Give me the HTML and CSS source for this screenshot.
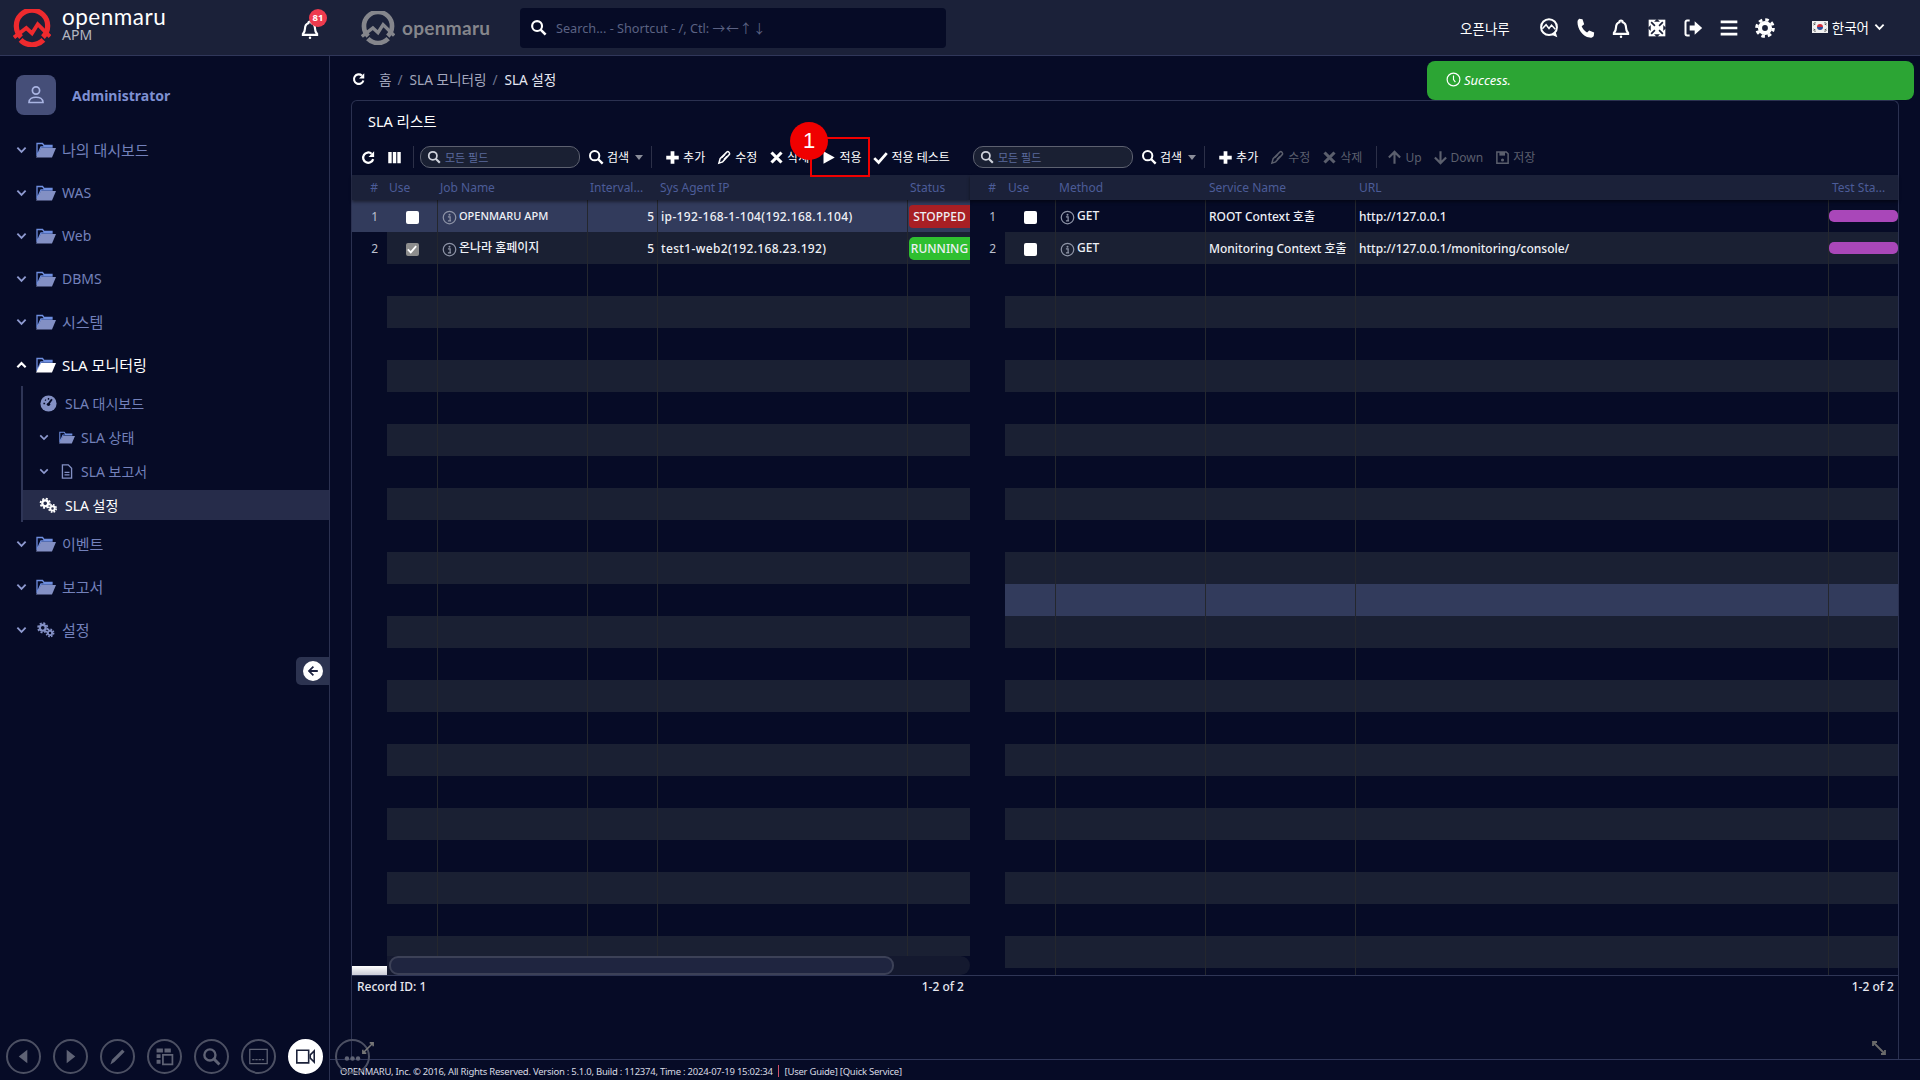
FILE: index.html
```html
<!DOCTYPE html>
<html lang="ko">
<head>
<meta charset="utf-8">
<title>OPENMARU APM - SLA 설정</title>
<link rel="stylesheet" href="styles.css">
</head>
<body>
<svg class="defs" width="0" height="0" aria-hidden="true">
  <symbol id="i-logo" viewBox="0 0 40 40">
    <path d="M8.5 29.5A16.5 16.5 0 1 1 31.5 29.5" fill="none" stroke="currentColor" stroke-width="5.5"/>
    <path d="M8 32.5A16.5 16.5 0 0 0 32 32.5" fill="none" stroke="currentColor" stroke-width="5.5"/>
    <path d="M1 30 L14 20 L20 25.500 L26 16 L39 29" fill="none" stroke="currentColor" stroke-width="4"/>
  </symbol>
  <symbol id="i-bell" viewBox="0 0 24 24"><path d="M12 3a2 2 0 0 1 2 2c3 1 4 3.500 4 6.500 0 3 .8 4.500 2.500 6.500v1h-17v-1c1.700-2 2.500-3.500 2.500-6.500 0-3 1-5.500 4-6.500a2 2 0 0 1 2-2z" fill="none" stroke="currentColor" stroke-width="2.600"/><circle cx="12" cy="22.500" r="1.500" fill="currentColor"/></symbol>
  <symbol id="i-search" viewBox="0 0 24 24"><circle cx="10" cy="10" r="7" fill="none" stroke="currentColor" stroke-width="3"/><path d="M15 15l7 7" stroke="currentColor" stroke-width="3.600"/></symbol>
  <symbol id="i-refresh" viewBox="0 0 24 24"><path d="M19.500 14.500A8.200 8.200 0 1 1 17 6" fill="none" stroke="currentColor" stroke-width="3.600"/><path d="M21 2v9h-9z" fill="currentColor"/></symbol>
  <symbol id="i-cols" viewBox="0 0 24 24"><path d="M2 3h5.500v18H2zM9.300 3h5.500v18H9.300zM16.500 3H22v18h-5.500z" fill="currentColor"/></symbol>
  <symbol id="i-plus" viewBox="0 0 24 24"><path d="M9 2h6v7h7v6h-7v7H9v-7H2V9h7z" fill="currentColor"/></symbol>
  <symbol id="i-pencil" viewBox="0 0 24 24"><path d="M3 21l2-7L16 3c2-1.500 5 1.500 4 4L9 19z" fill="none" stroke="currentColor" stroke-width="2.400"/><path d="M8 12l5-5M11 15l5-5" stroke="currentColor" stroke-width="2"/></symbol>
  <symbol id="i-x" viewBox="0 0 24 24"><path d="M4 4l16 16M20 4L4 20" stroke="currentColor" stroke-width="5"/></symbol>
  <symbol id="i-play" viewBox="0 0 24 24"><path d="M4 2l18 10L4 22z" fill="currentColor"/></symbol>
  <symbol id="i-check" viewBox="0 0 24 24"><path d="M2 13l7 7L22 5" fill="none" stroke="currentColor" stroke-width="4.400"/></symbol>
  <symbol id="i-up" viewBox="0 0 24 24"><path d="M12 22V4M3 12l9-9 9 9" fill="none" stroke="currentColor" stroke-width="3.400"/></symbol>
  <symbol id="i-down" viewBox="0 0 24 24"><path d="M12 2v18M3 12l9 9 9-9" fill="none" stroke="currentColor" stroke-width="3.400"/></symbol>
  <symbol id="i-save" viewBox="0 0 24 24"><path d="M3 3h15l3 3v15H3z" fill="none" stroke="currentColor" stroke-width="2.400"/><path d="M7 3h9v6H7z" fill="currentColor"/><circle cx="12" cy="16" r="2.500" fill="currentColor"/></symbol>
  <symbol id="i-info" viewBox="0 0 24 24"><circle cx="12" cy="12" r="10" fill="none" stroke="currentColor" stroke-width="2"/><circle cx="12" cy="7.500" r="1.600" fill="currentColor"/><path d="M9.500 11H13v6.500h1.500M9.500 17.500H13" fill="none" stroke="currentColor" stroke-width="2"/></symbol>
  <symbol id="i-chev" viewBox="0 0 12 8"><path d="M1.500 1.500L6 6l4.500-4.500" fill="none" stroke="currentColor" stroke-width="2"/></symbol>
  <symbol id="i-chevup" viewBox="0 0 12 8"><path d="M1.500 6.500L6 2l4.500 4.500" fill="none" stroke="currentColor" stroke-width="2.400"/></symbol>
  <symbol id="i-folder" viewBox="0 0 20 16"><path d="M1 14V1.500h5.500L8 3.500h8V5H5L1 14z" fill="none" stroke="#6f8fe0" stroke-width="1.300"/><path d="M5 6h15l-4 9.500H0z" fill="currentColor"/></symbol>
  <symbol id="i-cogs" viewBox="0 0 26 22"><g fill="none" stroke="currentColor"><circle cx="8.500" cy="8" r="4" stroke-width="3"/><circle cx="8.500" cy="8" r="6.400" stroke-width="2.400" stroke-dasharray="2.800 2.230"/><circle cx="18.500" cy="15" r="3" stroke-width="2.600"/><circle cx="18.500" cy="15" r="5" stroke-width="2.200" stroke-dasharray="2.300 1.630"/></g></symbol>
  <symbol id="i-gauge" viewBox="0 0 20 20"><circle cx="10" cy="10" r="9.500" fill="currentColor"/><path d="M10 10.500l4-5.500" stroke="#060b26" stroke-width="2.200"/><circle cx="10" cy="11" r="2" fill="#060b26"/><path d="M4 10h2M6 5.500l1 1M10 3.500v2" stroke="#060b26" stroke-width="1.600"/></symbol>
  <symbol id="i-file" viewBox="0 0 14 18"><path d="M1.500 1h7l4 4v12h-11z" fill="none" stroke="currentColor" stroke-width="1.600"/><path d="M4 10h6M4 13h6" stroke="currentColor" stroke-width="1.500"/></symbol>
  <symbol id="i-user" viewBox="0 0 20 20"><circle cx="10" cy="5.500" r="3.600" fill="none" stroke="currentColor" stroke-width="1.700"/><path d="M3 17.500c0-7 14-7 14 0z" fill="none" stroke="currentColor" stroke-width="1.700"/></symbol>
  <symbol id="i-chat" viewBox="0 0 24 24"><circle cx="12" cy="11" r="9.500" fill="none" stroke="currentColor" stroke-width="2.400"/><path d="M4 13l4.500-5 3.500 4.500 3-4 4.500 5" fill="none" stroke="currentColor" stroke-width="1.800"/><path d="M15 20l7 3-2-6z" fill="currentColor"/></symbol>
  <symbol id="i-phone" viewBox="0 0 24 24"><path d="M5 1l4 .5 2 6-3 2.500c1 3 3.500 6 6.500 7.500l2.500-2.500 6 2.500-.5 4c-1 1.500-3 2.500-5 2C9 22 3 13 3 5c0-2 1-3 2-4z" fill="currentColor"/></symbol>
  <symbol id="i-arrows" viewBox="0 0 24 24"><path d="M2 2h20v20H2z" fill="currentColor"/><path d="M12 1l3.500 3.500h-7zM12 23l-3.500-3.500h7zM1 12l3.500-3.500v7zM23 12l-3.500 3.500v-7z" fill="#1b2139"/><path d="M5 5l4.500 4.500M19 5l-4.500 4.500M5 19l4.500-4.500M19 19l-4.500-4.500" stroke="#1b2139" stroke-width="2"/></symbol>
  <symbol id="i-signout" viewBox="0 0 24 24"><path d="M8 3H5C3.500 3 3 4 3 5v14c0 1 .5 2 2 2h3" fill="none" stroke="currentColor" stroke-width="2.400"/><path d="M8 9h6V4l9 8-9 8v-5H8z" fill="currentColor"/></symbol>
  <symbol id="i-bars" viewBox="0 0 24 24"><path d="M2 3h20v3.200H2zM2 10.400h20v3.200H2zM2 17.800h20V21H2z" fill="currentColor"/></symbol>
  <symbol id="i-gear" viewBox="0 0 24 24"><g fill="none" stroke="currentColor"><circle cx="12" cy="12" r="6" stroke-width="5"/><circle cx="12" cy="12" r="10" stroke-width="3.600" stroke-dasharray="4.300 3.550"/></g></symbol>
  <symbol id="i-flag" viewBox="0 0 16 12"><rect width="16" height="12" fill="#f2f2f2"/><path d="M5 6a3 3 0 0 1 6 0z" fill="#d22f3c"/><path d="M5 6a3 3 0 0 0 6 0z" fill="#2a4f9c"/><path d="M1.500 2.500l2 -1M1.500 4l2-1M12.500 1.500l2 1M12.500 3l2 1M1.500 8l2 1M1.500 9.500l2 1M12.500 9l2-1M12.500 10.500l2-1" stroke="#333" stroke-width=".8"/></symbol>
  <symbol id="i-clock" viewBox="0 0 20 20"><circle cx="10" cy="10" r="8.500" fill="none" stroke="currentColor" stroke-width="1.600"/><path d="M10 4.500V10l2.500 3.500" fill="none" stroke="currentColor" stroke-width="1.500"/></symbol>
  <symbol id="i-back" viewBox="0 0 20 20"><path d="M10.500 4.500L5 10l5.500 5.500M5.500 10H16" fill="none" stroke="currentColor" stroke-width="2.200"/></symbol>
  <symbol id="i-tri-l" viewBox="0 0 20 20"><path d="M14 3v14L5 10z" fill="currentColor"/></symbol>
  <symbol id="i-tri-r" viewBox="0 0 20 20"><path d="M6 3v14l9-7z" fill="currentColor"/></symbol>
  <symbol id="i-pen" viewBox="0 0 24 24"><path d="M3 22l2-6L18 3l3 3L8 19z" fill="currentColor"/></symbol>
  <symbol id="i-panes" viewBox="0 0 24 24"><path d="M2 2h8v5H2zM12 2h8v5h-8zM2 9h5v5H2zM2 16h5v5H2z" fill="currentColor"/><path d="M10 10h12v12H10z" fill="none" stroke="currentColor" stroke-width="2.200"/></symbol>
  <symbol id="i-screen" viewBox="0 0 24 24"><path d="M1 3h22v18H1z" fill="none" stroke="currentColor" stroke-width="1.600"/><path d="M4 16h16" stroke="currentColor" stroke-width="1.600" stroke-dasharray="3 1"/></symbol>
  <symbol id="i-video" viewBox="0 0 24 24"><path d="M1 4h15v16H1z" fill="none" stroke="currentColor" stroke-width="2"/><path d="M23 5v14l-5-5v-4z" fill="none" stroke="currentColor" stroke-width="2"/></symbol>
  <symbol id="i-more" viewBox="0 0 24 24"><circle cx="5" cy="12" r="2.800" fill="currentColor"/><circle cx="12" cy="12" r="2.800" fill="currentColor"/><circle cx="19" cy="12" r="2.800" fill="currentColor"/></symbol>
  <symbol id="i-resize" viewBox="0 0 14 14"><path d="M2 2l10 10M1 5V1h4M13 9v4H9" fill="none" stroke="currentColor" stroke-width="1.800"/></symbol>
</svg>

<header class="topbar">
  <div class="brand">
    <svg class="logo"><use href="#i-logo"/></svg>
    <div class="brand-text"><span class="wordmark">openmaru</span><span class="apm">APM</span></div>
  </div>
  <div class="bell-wrap"><svg class="bell"><use href="#i-bell"/></svg><span class="badge">81</span></div>
  <div class="brand2">
    <svg class="logo2"><use href="#i-logo"/></svg><span class="wordmark2">openmaru</span>
  </div>
  <div class="global-search">
    <svg class="gs-icon"><use href="#i-search"/></svg>
    <span class="gs-text">Search... - Shortcut - /, Ctl: <span class="gs-arrows">→ ← ↑ ↓</span></span>
  </div>
  <div class="top-right">
    <span class="top-link">오픈나루</span>
    <svg class="top-icon"><use href="#i-chat"/></svg>
    <svg class="top-icon"><use href="#i-phone"/></svg>
    <svg class="top-icon"><use href="#i-bell"/></svg>
    <svg class="top-icon"><use href="#i-arrows"/></svg>
    <svg class="top-icon"><use href="#i-signout"/></svg>
    <svg class="top-icon"><use href="#i-bars"/></svg>
    <svg class="top-icon"><use href="#i-gear"/></svg>
    <div class="lang"><svg class="flag"><use href="#i-flag"/></svg><span>한국어</span><svg class="lang-chev"><use href="#i-chev"/></svg></div>
  </div>
</header>

<div class="layout">
  <aside class="side">
    <div class="user">
      <div class="avatar"><svg class="avatar-icon"><use href="#i-user"/></svg></div>
      <span class="user-name">Administrator</span>
    </div>
    <nav class="menu">
      <div class="mi"><svg class="chev"><use href="#i-chev"/></svg><svg class="folder"><use href="#i-folder"/></svg><span class="ko">나의 대시보드</span></div>
      <div class="mi"><svg class="chev"><use href="#i-chev"/></svg><svg class="folder"><use href="#i-folder"/></svg><span>WAS</span></div>
      <div class="mi"><svg class="chev"><use href="#i-chev"/></svg><svg class="folder"><use href="#i-folder"/></svg><span>Web</span></div>
      <div class="mi"><svg class="chev"><use href="#i-chev"/></svg><svg class="folder"><use href="#i-folder"/></svg><span>DBMS</span></div>
      <div class="mi"><svg class="chev"><use href="#i-chev"/></svg><svg class="folder"><use href="#i-folder"/></svg><span class="ko">시스템</span></div>
      <div class="mi mi-open"><svg class="chev"><use href="#i-chevup"/></svg><svg class="folder"><use href="#i-folder"/></svg><span class="ko">SLA 모니터링</span></div>
      <div class="sub">
        <div class="si"><svg class="si-icon"><use href="#i-gauge"/></svg><span>SLA 대시보드</span></div>
        <div class="si si-nest"><svg class="chev"><use href="#i-chev"/></svg><svg class="si-folder"><use href="#i-folder"/></svg><span>SLA 상태</span></div>
        <div class="si si-nest"><svg class="chev"><use href="#i-chev"/></svg><svg class="si-folder si-file"><use href="#i-file"/></svg><span>SLA 보고서</span></div>
        <div class="si si-active"><svg class="si-icon"><use href="#i-cogs"/></svg><span>SLA 설정</span></div>
      </div>
      <div class="mi"><svg class="chev"><use href="#i-chev"/></svg><svg class="folder"><use href="#i-folder"/></svg><span class="ko">이벤트</span></div>
      <div class="mi"><svg class="chev"><use href="#i-chev"/></svg><svg class="folder"><use href="#i-folder"/></svg><span class="ko">보고서</span></div>
      <div class="mi"><svg class="chev"><use href="#i-chev"/></svg><svg class="folder"><use href="#i-cogs"/></svg><span class="ko">설정</span></div>
    </nav>
    <button class="collapse"><svg class="collapse-icon"><use href="#i-back"/></svg></button>
  </aside>

  <main class="main">
    <div class="crumbs">
      <svg class="crumb-refresh"><use href="#i-refresh"/></svg>
      <span class="crumb">홈</span><span class="crumb-sep">/</span>
      <span class="crumb">SLA 모니터링</span><span class="crumb-sep">/</span>
      <span class="crumb crumb-now">SLA 설정</span>
    </div>

    <section class="panel">
      <h2 class="panel-title">SLA 리스트</h2>
      <div class="panes">
        <div class="pane pane-left">
          <div class="toolbar">
            <svg class="tb-ic"><use href="#i-refresh"/></svg>
            <svg class="tb-ic tb-cols"><use href="#i-cols"/></svg>
            <i class="tb-sep tb-sep-first"></i>
            <div class="tb-input"><svg class="tb-input-ic"><use href="#i-search"/></svg><span>모든 필드</span></div>
            <div class="tb-btn tb-search"><svg class="tb-ic-l"><use href="#i-search"/></svg><span>검색</span><i class="caret"></i></div>
            <i class="tb-sep"></i>
            <div class="tb-btn"><svg class="tb-ic"><use href="#i-plus"/></svg><span>추가</span></div>
            <div class="tb-btn"><svg class="tb-ic"><use href="#i-pencil"/></svg><span>수정</span></div>
            <div class="tb-btn"><svg class="tb-ic"><use href="#i-x"/></svg><span>삭제</span></div>
            <div class="tb-btn"><svg class="tb-ic"><use href="#i-play"/></svg><span>적용</span></div>
            <div class="tb-btn"><svg class="tb-ic"><use href="#i-check"/></svg><span>적용 테스트</span></div>
          </div>
          <div class="head"><span class="num">#</span><span>Use</span><span>Job Name</span><span>Interval...</span><span>Sys Agent IP</span><span>Status</span></div>
          <div class="rows">
            <div class="row row-sel"><span class="num">1</span><span class="ck"><b class="box"></b></span><span class="job"><svg class="info"><use href="#i-info"/></svg><em class="latin">OPENMARU APM</em></span><span class="right">5</span><span class="ip">ip-192-168-1-104(192.168.1.104)</span><span class="st"><b class="stat stat-stop">STOPPED</b></span></div>
            <div class="row"><span class="num">2</span><span class="ck"><b class="box box-on"><svg class="box-check"><use href="#i-check"/></svg></b></span><span class="job"><svg class="info"><use href="#i-info"/></svg><em>온나라 홈페이지</em></span><span class="right">5</span><span class="ip">test1-web2(192.168.23.192)</span><span class="st"><b class="stat stat-run">RUNNING</b></span></div>
            <div class="row"><i></i><i></i><i></i><i></i><i></i><i></i></div>
            <div class="row"><i></i><i></i><i></i><i></i><i></i><i></i></div>
            <div class="row"><i></i><i></i><i></i><i></i><i></i><i></i></div>
            <div class="row"><i></i><i></i><i></i><i></i><i></i><i></i></div>
            <div class="row"><i></i><i></i><i></i><i></i><i></i><i></i></div>
            <div class="row"><i></i><i></i><i></i><i></i><i></i><i></i></div>
            <div class="row"><i></i><i></i><i></i><i></i><i></i><i></i></div>
            <div class="row"><i></i><i></i><i></i><i></i><i></i><i></i></div>
            <div class="row"><i></i><i></i><i></i><i></i><i></i><i></i></div>
            <div class="row"><i></i><i></i><i></i><i></i><i></i><i></i></div>
            <div class="row"><i></i><i></i><i></i><i></i><i></i><i></i></div>
            <div class="row"><i></i><i></i><i></i><i></i><i></i><i></i></div>
            <div class="row"><i></i><i></i><i></i><i></i><i></i><i></i></div>
            <div class="row"><i></i><i></i><i></i><i></i><i></i><i></i></div>
            <div class="row"><i></i><i></i><i></i><i></i><i></i><i></i></div>
            <div class="row"><i></i><i></i><i></i><i></i><i></i><i></i></div>
            <div class="row"><i></i><i></i><i></i><i></i><i></i><i></i></div>
            <div class="row"><i></i><i></i><i></i><i></i><i></i><i></i></div>
            <div class="row"><i></i><i></i><i></i><i></i><i></i><i></i></div>
            <div class="row"><i></i><i></i><i></i><i></i><i></i><i></i></div>
            <div class="row"><i></i><i></i><i></i><i></i><i></i><i></i></div>
            <div class="row"><i></i><i></i><i></i><i></i><i></i><i></i></div>
          </div>
          <div class="hscroll"><i class="hs-corner"></i><div class="hs-track"><i class="hs-thumb"></i></div></div>
          <div class="status-line"><span>Record ID: 1</span><span>1-2 of 2</span></div>
        </div>

        <div class="pane pane-right">
          <div class="toolbar">
            <div class="tb-input"><svg class="tb-input-ic"><use href="#i-search"/></svg><span>모든 필드</span></div>
            <div class="tb-btn tb-search"><svg class="tb-ic-l"><use href="#i-search"/></svg><span>검색</span><i class="caret"></i></div>
            <i class="tb-sep"></i>
            <div class="tb-btn"><svg class="tb-ic"><use href="#i-plus"/></svg><span>추가</span></div>
            <div class="tb-btn tb-off"><svg class="tb-ic"><use href="#i-pencil"/></svg><span>수정</span></div>
            <div class="tb-btn tb-off"><svg class="tb-ic"><use href="#i-x"/></svg><span>삭제</span></div>
            <i class="tb-sep tb-sep-r"></i>
            <div class="tb-btn tb-off tb-up"><svg class="tb-ic"><use href="#i-up"/></svg><span>Up</span></div>
            <div class="tb-btn tb-off"><svg class="tb-ic"><use href="#i-down"/></svg><span>Down</span></div>
            <div class="tb-btn tb-off"><svg class="tb-ic"><use href="#i-save"/></svg><span>저장</span></div>
          </div>
          <div class="head"><span class="num">#</span><span>Use</span><span>Method</span><span>Service Name</span><span>URL</span><span>Test Sta...</span></div>
          <div class="rows">
            <div class="row"><span class="num">1</span><span class="ck"><b class="box"></b></span><span class="job"><svg class="info"><use href="#i-info"/></svg><em>GET</em></span><span>ROOT Context 호출</span><span>http://127.0.0.1</span><span class="st"><b class="pill"></b></span></div>
            <div class="row"><span class="num">2</span><span class="ck"><b class="box"></b></span><span class="job"><svg class="info"><use href="#i-info"/></svg><em>GET</em></span><span>Monitoring Context 호출</span><span>http://127.0.0.1/monitoring/console/</span><span class="st"><b class="pill"></b></span></div>
            <div class="row"><i></i><i></i><i></i><i></i><i></i><i></i></div>
            <div class="row"><i></i><i></i><i></i><i></i><i></i><i></i></div>
            <div class="row"><i></i><i></i><i></i><i></i><i></i><i></i></div>
            <div class="row"><i></i><i></i><i></i><i></i><i></i><i></i></div>
            <div class="row"><i></i><i></i><i></i><i></i><i></i><i></i></div>
            <div class="row"><i></i><i></i><i></i><i></i><i></i><i></i></div>
            <div class="row"><i></i><i></i><i></i><i></i><i></i><i></i></div>
            <div class="row"><i></i><i></i><i></i><i></i><i></i><i></i></div>
            <div class="row"><i></i><i></i><i></i><i></i><i></i><i></i></div>
            <div class="row"><i></i><i></i><i></i><i></i><i></i><i></i></div>
            <div class="row row-hl"><i></i><i></i><i></i><i></i><i></i><i></i></div>
            <div class="row"><i></i><i></i><i></i><i></i><i></i><i></i></div>
            <div class="row"><i></i><i></i><i></i><i></i><i></i><i></i></div>
            <div class="row"><i></i><i></i><i></i><i></i><i></i><i></i></div>
            <div class="row"><i></i><i></i><i></i><i></i><i></i><i></i></div>
            <div class="row"><i></i><i></i><i></i><i></i><i></i><i></i></div>
            <div class="row"><i></i><i></i><i></i><i></i><i></i><i></i></div>
            <div class="row"><i></i><i></i><i></i><i></i><i></i><i></i></div>
            <div class="row"><i></i><i></i><i></i><i></i><i></i><i></i></div>
            <div class="row"><i></i><i></i><i></i><i></i><i></i><i></i></div>
            <div class="row"><i></i><i></i><i></i><i></i><i></i><i></i></div>
            <div class="row"><i></i><i></i><i></i><i></i><i></i><i></i></div>
            <div class="row"><i></i><i></i><i></i><i></i><i></i><i></i></div>
          </div>
          <div class="status-line"><span></span><span>1-2 of 2</span></div>
        </div>
      </div>
      <svg class="panel-resize"><use href="#i-resize"/></svg>
    </section>

    <footer class="foot">
      <span>OPENMARU, Inc. © 2016, All Rights Reserved. Version : 5.1.0, Build : 112374, Time : 2024-07-19 15:02:34</span>
      <i class="foot-sep"></i>
      <span>[User Guide] [Quick Service]</span>
    </footer>
  </main>
</div>

<div class="toast"><svg class="toast-ic"><use href="#i-clock"/></svg><span>Success.</span></div>
<div class="callout-box"></div>
<div class="callout-num">1</div>

<div class="dock">
  <span class="dk"><svg class="dk-ic"><use href="#i-tri-l"/></svg></span>
  <span class="dk"><svg class="dk-ic"><use href="#i-tri-r"/></svg></span>
  <span class="dk"><svg class="dk-ic"><use href="#i-pen"/></svg></span>
  <span class="dk"><svg class="dk-ic"><use href="#i-panes"/></svg></span>
  <span class="dk"><svg class="dk-ic"><use href="#i-search"/></svg></span>
  <span class="dk"><svg class="dk-ic"><use href="#i-screen"/></svg></span>
  <span class="dk dk-on"><svg class="dk-ic"><use href="#i-video"/></svg></span>
  <span class="dk"><svg class="dk-ic dk-more"><use href="#i-more"/></svg><svg class="dk-extra"><use href="#i-resize"/></svg></span>
</div>
</body>
</html>
```
FILE: styles.css
```css
* { box-sizing: border-box; }
html, body { margin: 0; height: 100%; }
body {
  position: relative;
  display: flex;
  flex-direction: column;
  height: 1080px;
  overflow: hidden;
  background: #060b26;
  color: #fff;
  font-family: "Noto Sans", "Noto Sans CJK KR", sans-serif;
  font-size: 12px;
}
.defs { position: absolute; }
svg { display: block; flex: none; }

/* top bar */
.topbar {
  flex: none;
  display: flex;
  align-items: center;
  height: 56px;
  background: #1b2139;
  border-bottom: 1px solid #30375a;
}
.brand { display: flex; align-items: center; width: 300px; padding-left: 13px; gap: 11px; }
.logo { width: 38px; height: 38px; color: #ee2a2e; }
.brand-text { display: flex; flex-direction: column; margin-top: -3px; }
.wordmark { font: 400 22.5px/18px Lato, sans-serif; letter-spacing: .5px; color: #fff; }
.apm { font-size: 14px; line-height: 18px; color: #b4b7c2; }
.bell-wrap { position: relative; width: 20px; height: 20px; margin-top: 2px; }
.bell { width: 20px; height: 20px; color: #fff; }
.badge {
  position: absolute; left: 9px; top: -10px;
  width: 18px; height: 18px; border-radius: 50%;
  background: #ee3b4e; color: #fff;
  font-size: 9.500px; font-weight: 700; line-height: 18px; text-align: center;
}
.brand2 { display: flex; align-items: center; gap: 7px; margin-left: 41px; width: 159px; }
.logo2 { width: 34px; height: 34px; color: #85868c; }
.wordmark2 { font: 700 19px/1 Lato, sans-serif; color: #85868c; letter-spacing: .3px; }
.global-search {
  display: flex; align-items: center; gap: 9px;
  width: 426px; height: 40px; padding-left: 10px;
  background: #060b26; border-radius: 4px;
}
.gs-icon { width: 17px; height: 17px; color: #fff; }
.gs-text { font-size: 12.700px; color: #5b6283; }
.gs-arrows { word-spacing: -2.500px; }
.top-right { display: flex; align-items: center; margin-left: auto; padding-right: 35px; }
.top-link { font-size: 13.500px; margin-right: 29px; }
.top-icon { width: 20px; height: 20px; margin-right: 16px; color: #fff; }
.lang { display: flex; align-items: center; gap: 4px; margin: -2px 0 0 21px; font-size: 13.500px; }
.flag { width: 16px; height: 12px; }
.lang-chev { width: 11px; height: 8px; margin-left: 1px; }

/* layout */
.layout { flex: 1; display: flex; min-height: 0; }
.side {
  position: relative;
  flex: none;
  width: 330px;
  padding-top: 19px;
  border-right: 1px solid #2b3150;
}
.user { display: flex; align-items: center; gap: 16px; padding-left: 16px; margin-bottom: 13px; }
.avatar {
  display: flex; align-items: center; justify-content: center;
  width: 40px; height: 40px; border-radius: 8px;
  background: #454e78;
}
.avatar-icon { width: 20px; height: 20px; color: #a9b4e2; }
.user-name { font-size: 14px; font-weight: 700; color: #7e90d2; }

.mi {
  display: flex; align-items: center;
  height: 43px; padding-left: 16px;
  font-size: 14px; color: #7381bb;
}
.ko { font-size: 15px; }
.chev { width: 11px; height: 8px; color: #8e9ad0; }
.folder { width: 20px; height: 16px; margin: 0 6px 0 9px; color: #8390c4; }
.mi-open { color: #fff; }
.mi-open .chev { color: #fff; }
.mi-open .folder { color: #fff; }
.sub {
  margin-left: 21px; padding-top: 2px; height: 136px;
  border-left: 2px solid #2e3556;
}
.si {
  display: flex; align-items: center;
  height: 30px; margin-bottom: 4px; padding-left: 16px;
  font-size: 14px; color: #7381bb;
}
.si-icon { width: 19px; height: 17px; margin-right: 7px; color: #8390c4; }
.si-nest .chev { width: 10px; height: 7px; }
.si-folder { width: 16px; height: 13px; margin: 0 6px 0 10px; color: #8390c4; }
.si-file { height: 15px; }
.si-active { background: #262c4a; color: #fff; }
.si-active .si-icon { color: #fff; }
.collapse {
  position: absolute; right: 0; top: 601px;
  display: flex; align-items: center; justify-content: center;
  width: 33px; height: 28px; padding: 0;
  background: #2c3350; border: 0; border-radius: 5px 0 0 5px;
}
.collapse-icon { width: 20px; height: 20px; padding: 2px; border-radius: 50%; background: #fff; color: #1c2240; }

/* main */
.main { flex: 1; min-width: 0; display: flex; flex-direction: column; }
.crumbs {
  flex: none; display: flex; align-items: center;
  height: 44px; padding: 2px 0 0 22px; font-size: 13.600px; color: #a3a7bd;
}
.crumb-refresh { width: 14px; height: 14px; margin-right: 13px; color: #fff; }
.crumb-sep { margin: 0 7px 0 6px; color: #6f7590; }
.crumb-now { color: #e6e8f2; }

.panel {
  position: relative;
  flex: 1; min-height: 0;
  display: flex; flex-direction: column;
  margin: 0 21px 0 21px;
  border: 1px solid #2b3150;
  border-bottom: 0;
  border-radius: 6px 6px 0 0;
}
.panel-title { flex: none; margin: 0; height: 40px; padding-left: 16px; font-size: 14.500px; font-weight: 400; line-height: 40px; }
.panes { flex: 1; min-height: 0; display: flex; }
.pane { display: flex; flex-direction: column; min-width: 0; }
.pane-left { flex: none; width: 618px; }
.pane-right { flex: 1; }

/* toolbars */
.toolbar { flex: none; display: flex; align-items: center; height: 34px; padding-bottom: 2px; font-size: 12px; color: #fff; }
.pane-left .toolbar { padding-left: 9px; }
.pane-right .toolbar { padding-left: 3px; }
.tb-ic { width: 15px; height: 15px; }
.tb-cols { margin-left: 11px; }
.tb-sep { width: 1px; height: 22px; margin: 0 13px 0 8px; background: #2c3048; }
.tb-sep-first { margin: 0 6px 0 11px; }
.tb-sep-r { margin: 0 10px 0 2px; }
.tb-input {
  display: flex; align-items: center; gap: 4px;
  width: 160px; height: 22px; padding-left: 6px;
  background: #1a2033; border: 1px solid #5d6170; border-radius: 10px;
  font-size: 11px; color: #5b6a9c;
}
.tb-input-ic { width: 14px; height: 14px; color: #cfd2dc; }
.tb-btn { display: flex; align-items: center; gap: 3px; margin-right: 12px; white-space: nowrap; }
.tb-search { gap: 3px; margin: 0 0 0 8px; }
.tb-ic-l { width: 16px; height: 16px; }
.caret { width: 0; height: 0; margin-left: 3px; border: 4px solid transparent; border-top: 5px solid #8a8d99; border-bottom: 0; }
.tb-off { color: #5b5f6d; }
.tb-off.tb-up { margin-right: 11px; }

/* grid */
.head, .row { display: grid; }
.pane-left .head, .pane-left .row { grid-template-columns: 35px 51px 150px 70px 250px 62px; }
.pane-right .head, .pane-right .row { grid-template-columns: 35px 51px 150px 150px 473px 1fr; }
.head {
  flex: none; height: 25px; align-items: center;
  background: #1b2139; color: #4c5c98; font-size: 12px;
  box-shadow: 0 2px 3px rgba(0, 0, 0, .45);
  position: relative; z-index: 1;
}
.head span { padding-left: 3px; white-space: nowrap; overflow: hidden; }
.pane-left .head span { padding-left: 2px; }
.head .num, .pane-left .head .num { padding: 0 9px 0 0; text-align: right; }
.rows { flex: 1; min-height: 0; overflow: hidden; }
.row { height: 32px; font-size: 12px; font-weight: 500; color: #eef0f6; }
.row > * {
  display: flex; align-items: center; min-width: 0;
  padding-left: 3px; white-space: nowrap; overflow: hidden;
  font-style: normal;
  border-right: 1px solid #24272e;
}
.row > :first-child { border-right: 0; padding: 0 9px 0 0; justify-content: flex-end; color: #bcc0cf; font-weight: 400; }
.row > :last-child { border-right: 0; padding: 0; }
.row:nth-child(even) > :not(:first-child) { background: #1a2033; }
.row-sel > *, .row-sel:nth-child(even) > * { background: #323b5c; }
.row-hl > :not(:first-child) { background: #323b5c; }
.ck { justify-content: center; padding: 2px 0 0 !important; }
.box { display: flex; align-items: center; justify-content: center; width: 13px; height: 13px; background: #fff; border-radius: 2px; }
.box-on { background: #8d8d8d; }
.box-check { width: 10px; height: 10px; color: #fff; }
.job em { font-style: normal; margin: -2px 0 0 2px; }
.job .latin { font-size: 11px; }
.info { width: 15px; height: 15px; margin: 2px 0 0 1px; color: #8d93a6; }
.right { justify-content: flex-end; padding: 0 3px 0 0 !important; }
.ip { letter-spacing: .35px; padding-left: 3px !important; }
.st { align-items: center; }
.stat { display: block; width: 100%; height: 23px; margin-left: 1px; border-radius: 4px 0 0 4px; font-weight: 500; line-height: 23px; text-align: center; }
.stat-stop { background: #a81f24; }
.stat-run { background: #2fbf30; border-radius: 5px 0 0 5px; }
.pill { display: block; width: 100%; height: 12px; background: #a947b9; border-radius: 5px; }

.hscroll { flex: none; display: flex; height: 19px; }
.hs-corner { flex: none; align-self: flex-end; width: 35px; height: 9px; background: linear-gradient(#fff, #c9cbd6); }
.hs-track { flex: 1; display: flex; padding: 0 76px 0 2px; background: #14192f; border-radius: 0 10px 10px 0; }
.hs-thumb { flex: 1; background: #1f2540; border: 2px solid #3c4157; border-radius: 9px; }
.status-line {
  flex: none; display: flex; justify-content: space-between; align-items: center;
  height: 84px; padding: 0 4px 62px 5px;
  border-top: 1px solid #2f3656;
  font-size: 12px; font-weight: 500; color: #e6e8f0;
}
.pane-left .status-line { padding-right: 6px; }
.panel-resize { position: absolute; right: 12px; bottom: 4px; width: 14px; height: 14px; color: #6a6a6a; }

/* footer */
.foot {
  flex: none; display: flex; align-items: center;
  height: 21px; padding: 2px 0 0 10px;
  border-top: 1px solid #30375a;
  font-size: 9.500px; letter-spacing: -.25px; color: #d8dae4;
}
.foot-sep { width: 1px; height: 12px; margin: 0 6px 0 5px; background: #d0506a; }

/* overlays */
.toast {
  position: absolute; left: 1427px; top: 61px;
  display: flex; align-items: center; gap: 3px;
  width: 487px; height: 39px; padding: 0 0 2px 19px;
  background: #2ca534; border-radius: 8px;
  font-size: 13px; font-style: italic;
}
.toast-ic { width: 15px; height: 15px; }
.callout-box { position: absolute; z-index: 5; left: 810px; top: 137px; width: 60px; height: 40px; border: 2px solid #f00000; }
.callout-num {
  position: absolute; z-index: 6; left: 790px; top: 122px;
  width: 38px; height: 38px; border-radius: 50%;
  background: #f00000; color: #fff;
  font: 22px/38px "Liberation Sans", sans-serif; text-align: center;
}
.dock { position: absolute; z-index: 4; left: 6px; bottom: 6px; display: flex; gap: 12px; }
.dk {
  position: relative; display: flex; align-items: center; justify-content: center;
  width: 35px; height: 35px; border: 2px solid #4c5063; border-radius: 50%;
  color: #5f6375;
}
.dk-ic { width: 19px; height: 19px; }
.dk-on { background: #fff; border-color: #fff; color: #1b2139; }
.dk-more { margin-top: 4px; }
.dk-extra { position: absolute; right: -6px; top: 1px; width: 12px; height: 12px; transform: scaleX(-1); color: #777; }
```
